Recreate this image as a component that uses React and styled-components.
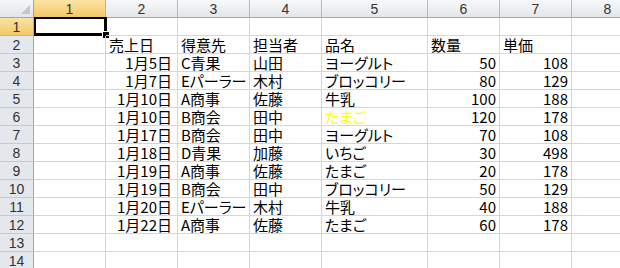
import React from 'react';
import styled, { createGlobalStyle } from 'styled-components';

const GlobalStyle = createGlobalStyle`
  html, body {
    margin: 0;
    padding: 0;
    background: #ffffff;
    overflow: hidden;
  }
  body {
    font-family: "Noto Sans CJK JP", "Liberation Sans", sans-serif;
  }
`;

const Sheet = styled.div`
  display: grid;
  grid-template-columns: 34px repeat(4, 72px) 106px repeat(3, 72px);
  grid-auto-rows: 18px;
  width: 620px;
  height: 268px;
  overflow: hidden;
`;

const Corner = styled.div`
  position: relative;
  box-sizing: border-box;
  background: linear-gradient(#f5f6f8, #e2e5e9);
  border-right: 1px solid #9ea6b0;
  border-bottom: 1px solid #9ea6b0;
  &::after {
    content: '';
    position: absolute;
    right: 3px;
    bottom: 3px;
    border-left: 9px solid transparent;
    border-bottom: 9px solid #c3c7cc;
  }
`;

const ColHead = styled.div`
  box-sizing: border-box;
  display: flex;
  align-items: center;
  justify-content: center;
  background: ${(p) =>
    p.$active
      ? 'linear-gradient(#fbe3a4, #f3c966)'
      : 'linear-gradient(#f7f8fa, #e3e6ea)'};
  border-right: 1px solid ${(p) => (p.$active ? '#e2b155' : '#b4bac3')};
  border-bottom: 1px solid ${(p) => (p.$active ? '#e5a83c' : '#9ea6b0')};
  font-family: "Liberation Sans", sans-serif;
  font-size: 14px;
  color: #333;
  padding-top: 1px;
`;

const RowHead = styled.div`
  box-sizing: border-box;
  display: flex;
  align-items: center;
  justify-content: center;
  background: ${(p) =>
    p.$active ? 'linear-gradient(#fbe3a4, #f3c966)' : '#e4e8ed'};
  border-right: 1px solid ${(p) => (p.$active ? '#e5a83c' : '#9ea6b0')};
  border-bottom: 1px solid ${(p) => (p.$active ? '#e2b155' : '#c5cad1')};
  font-family: "Liberation Sans", sans-serif;
  font-size: 14px;
  color: #333;
  padding-top: 1px;
`;

const Cell = styled.div`
  position: relative;
  box-sizing: border-box;
  border-right: 1px solid #d6d6d6;
  border-bottom: 1px solid #d6d6d6;
  padding: 0 ${(p) => p.$pad ?? 2}px 0 3px;
  text-align: ${(p) => p.$align || 'left'};
  font-size: 15px;
  line-height: 17px;
  font-feature-settings: "palt";
  color: ${(p) => p.$color || '#000'};
  white-space: nowrap;
`;

const Selection = styled.div`
  position: absolute;
  left: 0;
  top: -1px;
  right: -2px;
  bottom: -1px;
  border: 2px solid #000;
  border-right-width: 3px;
  border-bottom-width: 3px;
  pointer-events: none;
  &::after {
    content: '';
    position: absolute;
    right: -6px;
    bottom: -6px;
    width: 6px;
    height: 6px;
    background: #000;
    border: 1px solid #fff;
  }
`;

const columns = ['1', '2', '3', '4', '5', '6', '7', '8'];

const header = ['売上日', '得意先', '担当者', '品名', '数量', '単価'];

const rows = [
  ['1月5日', 'C青果', '山田', 'ヨーグルト', 50, 108],
  ['1月7日', 'Eパーラー', '木村', 'ブロッコリー', 80, 129],
  ['1月10日', 'A商事', '佐藤', '牛乳', 100, 188],
  ['1月10日', 'B商会', '田中', 'たまご', 120, 178, true],
  ['1月17日', 'B商会', '田中', 'ヨーグルト', 70, 108],
  ['1月18日', 'D青果', '加藤', 'いちご', 30, 498],
  ['1月19日', 'A商事', '佐藤', 'たまご', 20, 178],
  ['1月19日', 'B商会', '田中', 'ブロッコリー', 50, 129],
  ['1月20日', 'Eパーラー', '木村', '牛乳', 40, 188],
  ['1月22日', 'A商事', '佐藤', 'たまご', 60, 178],
];

function EmptyCells({ count }) {
  return Array.from({ length: count }, (_, i) => <Cell key={i} />);
}

export default function App() {
  return (
    <>
      <GlobalStyle />
      <Sheet>
        <Corner />
        {columns.map((c, i) => (
          <ColHead key={c} $active={i === 0}>
            {c}
          </ColHead>
        ))}

        <RowHead $active>1</RowHead>
        <Cell>
          <Selection />
        </Cell>
        <EmptyCells count={7} />

        <RowHead>2</RowHead>
        <Cell />
        {header.map((h) => (
          <Cell key={h}>{h}</Cell>
        ))}
        <Cell />

        {rows.map(([date, client, staff, item, qty, price, hl], i) => (
          <React.Fragment key={i}>
            <RowHead>{i + 3}</RowHead>
            <Cell />
            <Cell $align="right" $pad={5}>{date}</Cell>
            <Cell>{client}</Cell>
            <Cell>{staff}</Cell>
            <Cell $color={hl ? '#ffff00' : undefined}>{item}</Cell>
            <Cell $align="right" $pad={3}>{qty}</Cell>
            <Cell $align="right" $pad={3}>{price}</Cell>
            <Cell />
          </React.Fragment>
        ))}

        {[13, 14].map((n) => (
          <React.Fragment key={n}>
            <RowHead>{n}</RowHead>
            <EmptyCells count={8} />
          </React.Fragment>
        ))}
      </Sheet>
    </>
  );
}
